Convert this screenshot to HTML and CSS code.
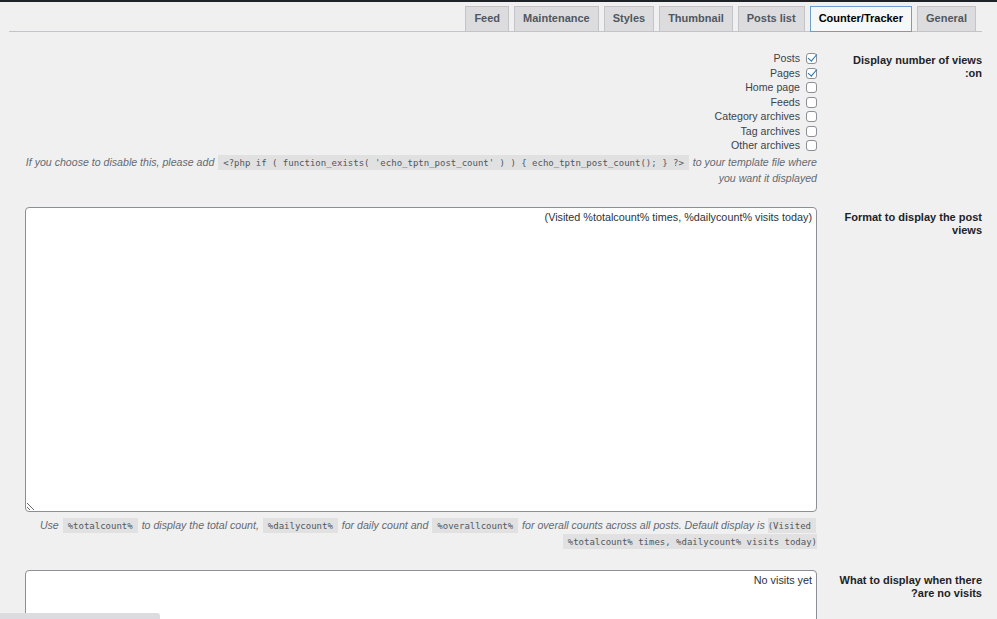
FILE: index.html
```html
<!DOCTYPE html>
<html dir="rtl" lang="en">
<head>
<meta charset="utf-8">
<title>Top 10 Settings</title>
<link rel="stylesheet" href="styles.css">
</head>
<body>
<div class="topbar"></div>
<div class="wrap">
  <nav class="tabs">
    <a class="tab">General</a>
    <a class="tab active">Counter/Tracker</a>
    <a class="tab">Posts list</a>
    <a class="tab">Thumbnail</a>
    <a class="tab">Styles</a>
    <a class="tab">Maintenance</a>
    <a class="tab">Feed</a>
  </nav>

  <div class="row first">
    <div class="th">Display number of views on:</div>
    <div class="td">
      <label class="check"><input type="checkbox" checked>Posts</label>
      <label class="check"><input type="checkbox" checked>Pages</label>
      <label class="check"><input type="checkbox">Home page</label>
      <label class="check"><input type="checkbox">Feeds</label>
      <label class="check"><input type="checkbox">Category archives</label>
      <label class="check"><input type="checkbox">Tag archives</label>
      <label class="check"><input type="checkbox">Other archives</label>
      <p class="desc">If you choose to disable this, please add <code>&lt;?php if ( function_exists( 'echo_tptn_post_count' ) ) { echo_tptn_post_count(); } ?&gt;</code> to your template file where you want it displayed</p>
    </div>
  </div>

  <div class="row">
    <div class="th">Format to display the post views</div>
    <div class="td">
      <textarea class="big">(Visited %totalcount% times, %dailycount% visits today)</textarea>
      <p class="desc after">Use <code>%totalcount%</code> to display the total count, <code>%dailycount%</code> for daily count and <code>%overallcount%</code> for overall counts across all posts. Default display is <code>(Visited %totalcount% times, %dailycount% visits today)</code></p>
    </div>
  </div>

  <div class="row">
    <div class="th">What to display when there are no visits?</div>
    <div class="td">
      <textarea class="small">No visits yet</textarea>
    </div>
  </div>
</div>
<div class="hscroll"></div>
</body>
</html>
```

FILE: styles.css
```css
html, body {
  margin: 0;
  padding: 0;
}

body {
  background: #f0f0f1;
  font-family: "Liberation Sans", Arial, sans-serif;
  font-size: 10.6px;
  color: #3c434a;
  overflow: hidden;
}

.topbar {
  height: 2px;
  background: #1d2327;
}

.wrap {
  margin: 0 15px 0 9px;
}

.tabs {
  display: flex;
  gap: 5px;
  padding: 4px 6px 0 0;
  border-bottom: 1px solid #c3c4c7;
}

.tab {
  display: block;
  height: 24px;
  line-height: 23px;
  padding: 0 8px;
  border: 1px solid #c3c4c7;
  background: #dcdcde;
  color: #50575e;
  font-weight: bold;
  font-size: 11px;
  margin-bottom: -1px;
  text-decoration: none;
}

.tab.active {
  background: #f6f7f7;
  border-color: #6a9fd0;
  color: #000;
}

.row {
  display: grid;
  grid-template-columns: 164px 1fr;
}

.row.first {
  margin-top: 9px;
}

.th {
  padding: 14.5px 0 0 18px;
  font-weight: bold;
  font-size: 11px;
  line-height: 13px;
  color: #1d2327;
}

.row.first .th {
  padding-top: 12.5px;
}

.td {
  padding: 10px 1px 11px 16px;
  min-width: 0;
}

.check {
  display: block;
  line-height: 14.5px;
  color: #3c434a;
}

.check input {
  appearance: none;
  -webkit-appearance: none;
  box-sizing: border-box;
  width: 11px;
  height: 11px;
  margin: 0 0 0 6px;
  border: 1px solid #8c8f94;
  border-radius: 3px;
  background: #fff;
  vertical-align: -2px;
  position: relative;
}

.check input:checked::before {
  content: "";
  position: absolute;
  left: 2.5px;
  top: -2px;
  width: 3.5px;
  height: 8px;
  border: solid #2271b1;
  border-width: 0 1.8px 1.8px 0;
  transform: rotate(40deg);
}

.desc {
  margin: 1px 0 0;
  font-style: italic;
  color: #646970;
  line-height: 16px;
}

.desc.after {
  margin-top: 5px;
}

code {
  font-family: "DejaVu Sans Mono", "Liberation Mono", monospace;
  font-size: 9px;
  line-height: 1;
  font-style: normal;
  background: rgba(0, 0, 0, 0.06);
  padding: 3px 5px 2px;
  margin: 0 1px;
  color: #50575e;
}

textarea {
  display: block;
  width: 100%;
  box-sizing: border-box;
  border: 1px solid #8c8f94;
  border-radius: 4px;
  padding: 2px 4px;
  font-family: "Liberation Sans", Arial, sans-serif;
  font-size: 10.8px;
  line-height: 14px;
  color: #2c3338;
  background: #fff;
  margin: 0;
}

textarea.big {
  height: 305px;
}

textarea.small {
  height: 100px;
}

.hscroll {
  position: fixed;
  left: 0;
  bottom: 0;
  width: 160px;
  height: 6px;
  background: #dcdce0;
  border-top-right-radius: 3px;
}
```
